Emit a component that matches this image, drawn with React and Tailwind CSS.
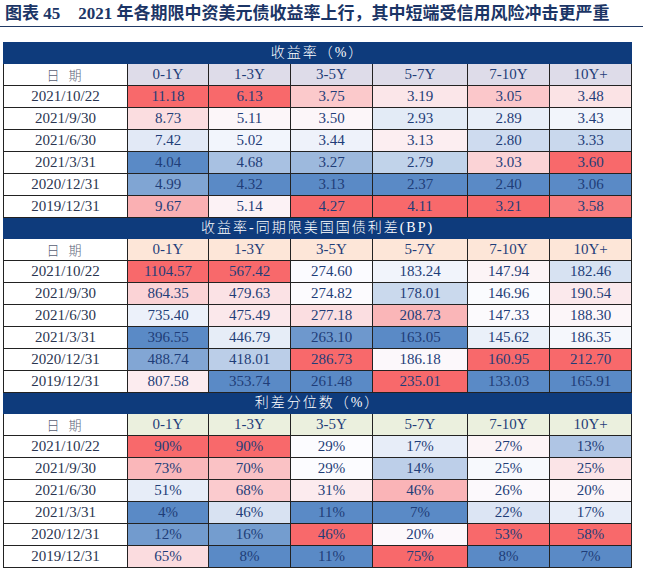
const DATES = ['2021/10/22', '2021/9/30', '2021/6/30', '2021/3/31', '2020/12/31', '2019/12/31']
const COLS = ['0-1Y', '1-3Y', '3-5Y', '5-7Y', '7-10Y', '10Y+']

// values are per column, rows in DATES order
const SECTIONS = [
    {
        title: '收益率（%）',
        headBg: 'bg-[#dedce9]',
        fmt: v => v.toFixed(2),
        cols: [
            [11.18, 8.73, 7.42, 4.04, 4.99, 9.67],
            [6.13, 5.11, 5.02, 4.68, 4.32, 5.14],
            [3.75, 3.50, 3.44, 3.27, 3.13, 4.27],
            [3.19, 2.93, 3.13, 2.79, 2.37, 4.11],
            [3.05, 2.89, 2.80, 3.03, 2.40, 3.21],
            [3.48, 3.43, 3.33, 3.60, 3.06, 3.58],
        ],
    },
    {
        title: '收益率-同期限美国国债利差(BP)',
        headBg: 'bg-[#fde6d8]',
        fmt: v => v.toFixed(2),
        cols: [
            [1104.57, 864.35, 735.40, 396.55, 488.74, 807.58],
            [567.42, 479.63, 475.49, 446.79, 418.01, 353.74],
            [274.60, 274.82, 277.18, 263.10, 286.73, 261.48],
            [183.24, 178.01, 208.73, 163.05, 186.18, 235.01],
            [147.94, 146.96, 147.33, 145.62, 160.95, 133.03],
            [182.46, 190.54, 188.30, 186.35, 212.70, 165.91],
        ],
    },
    {
        title: '利差分位数（%）',
        headBg: 'bg-[#ebf0de]',
        fmt: v => v + '%',
        cols: [
            [90, 73, 51, 4, 12, 65],
            [90, 70, 68, 46, 16, 8],
            [29, 29, 31, 11, 46, 11],
            [17, 14, 46, 7, 20, 75],
            [27, 25, 26, 22, 53, 8],
            [13, 25, 20, 17, 58, 7],
        ],
    },
]

const RED = [248, 105, 107]
const MID = [252, 252, 255]
const BLUE = [90, 138, 198]

// excel style 3 colour scale: min blue, median white, max red
function heat(values, v) {
    const s = [...values].sort((a, b) => a - b)
    const mid = (s[2] + s[3]) / 2
    const hi = s[s.length - 1]
    const lo = s[0]
    let t = 0
    let to = RED
    if (v >= mid) {
        t = hi === mid ? 0 : (v - mid) / (hi - mid)
    } else {
        t = (mid - v) / (mid - lo)
        to = BLUE
    }
    const c = MID.map((m, i) => Math.round(m + (to[i] - m) * t))
    return `rgb(${c[0]}, ${c[1]}, ${c[2]})`
}

const serif = 'font-["Liberation_Serif","Noto_Sans_CJK_SC",serif]'

function Section({ section }) {
    return (
        <>
            <tr className="h-[21px] bg-[#0e3b7c]">
                <td colSpan={7} className="border border-[#0e3b7c] text-center text-white text-[14px] font-light tracking-[2px] leading-none">
                    {section.title}
                </td>
            </tr>
            <tr className={`h-[22px] ${section.headBg}`}>
                <td className="bg-white border border-[#222] text-center text-[13px] text-[#5a5f75] font-light tracking-[3px] font-['Noto_Sans_CJK_SC',sans-serif] leading-none">日 期</td>
                {COLS.map(c => (
                    <td key={c} className="border border-[#222] text-center text-[15px] text-[#1f3d78] leading-none">{c}</td>
                ))}
            </tr>
            {DATES.map((d, r) => (
                <tr key={d} className="h-[22px]">
                    <td className="bg-white border border-[#222] text-center text-[15px] text-[#2a3550] leading-none">{d}</td>
                    {section.cols.map((col, i) => (
                        <td key={i} className="border border-[#222] text-center text-[15px] text-[#1f3d78] leading-none" style={{ backgroundColor: heat(col, col[r]) }}>
                            {section.fmt(col[r])}
                        </td>
                    ))}
                </tr>
            ))}
        </>
    )
}

export default function App() {
    return (
        <div className={`w-[650px] h-[570px] bg-white overflow-hidden ${serif}`}>
            <div className="w-[643px] h-[27px] border-b border-[#1f3864] flex items-end pl-[5px] pb-[2px]">
                <span className="text-[17px] leading-[20px] font-bold text-[#1b3566] whitespace-nowrap">
                    图表 45<span className="inline-block w-[18px]"></span>2021 年各期限中资美元债收益率上行，其中短端受信用风险冲击更严重
                </span>
            </div>
            <table className="mt-[15px] ml-[3px] w-[628px] table-fixed border-collapse">
                <colgroup>
                    <col className="w-[124px]" />
                    <col className="w-[81px]" />
                    <col className="w-[82px]" />
                    <col className="w-[82px]" />
                    <col className="w-[95px]" />
                    <col className="w-[82px]" />
                    <col className="w-[82px]" />
                </colgroup>
                <tbody>
                    {SECTIONS.map(s => (
                        <Section key={s.title} section={s} />
                    ))}
                </tbody>
            </table>
        </div>
    )
}
